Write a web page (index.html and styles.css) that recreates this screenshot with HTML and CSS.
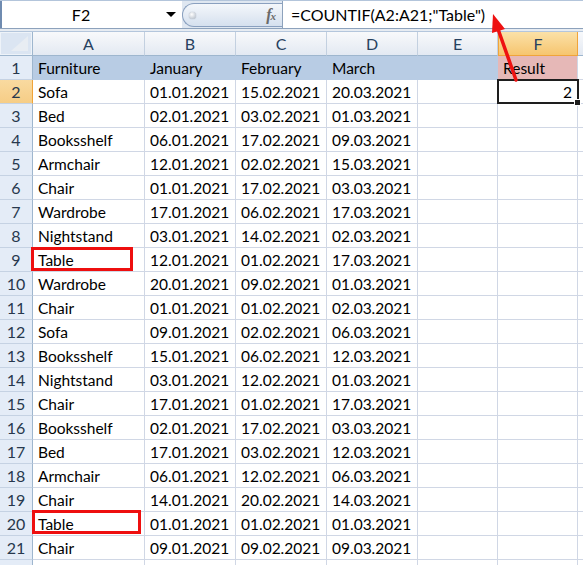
FILE: index.html
```html
<!DOCTYPE html>
<html>
<head>
<meta charset="utf-8">
<link rel="stylesheet" href="styles.css">
</head>
<body>
<div class="app">
  <div class="fbar">
    <div class="namebox"><span class="ref">F2</span><span class="drop"></span></div>
    <div class="pill"><span class="dot"></span><span class="fx">f<small>x</small></span></div>
    <div class="formula">=COUNTIF(A2:A21;"Table")</div>
  </div>
  <div class="strip"></div>
  <div class="sheet">
    <div class="corner"><span class="tri"></span></div>
    <div class="ch">A</div><div class="ch">B</div><div class="ch">C</div><div class="ch">D</div><div class="ch">E</div><div class="ch sel">F</div><div class="ch"></div>

    <div class="rh">1</div><div class="c hd">Furniture</div><div class="c hd">January</div><div class="c hd">February</div><div class="c hd">March</div><div class="c hd"></div><div class="c res">Result</div><div class="c"></div>
    <div class="rh sel">2</div><div class="c">Sofa</div><div class="c">01.01.2021</div><div class="c">15.02.2021</div><div class="c">20.03.2021</div><div class="c"></div><div class="c num">2</div><div class="c"></div>
    <div class="rh">3</div><div class="c">Bed</div><div class="c">02.01.2021</div><div class="c">03.02.2021</div><div class="c">01.03.2021</div><div class="c"></div><div class="c"></div><div class="c"></div>
    <div class="rh">4</div><div class="c">Booksshelf</div><div class="c">06.01.2021</div><div class="c">17.02.2021</div><div class="c">09.03.2021</div><div class="c"></div><div class="c"></div><div class="c"></div>
    <div class="rh">5</div><div class="c">Armchair</div><div class="c">12.01.2021</div><div class="c">02.02.2021</div><div class="c">15.03.2021</div><div class="c"></div><div class="c"></div><div class="c"></div>
    <div class="rh">6</div><div class="c">Chair</div><div class="c">01.01.2021</div><div class="c">17.02.2021</div><div class="c">03.03.2021</div><div class="c"></div><div class="c"></div><div class="c"></div>
    <div class="rh">7</div><div class="c">Wardrobe</div><div class="c">17.01.2021</div><div class="c">06.02.2021</div><div class="c">17.03.2021</div><div class="c"></div><div class="c"></div><div class="c"></div>
    <div class="rh">8</div><div class="c">Nightstand</div><div class="c">03.01.2021</div><div class="c">14.02.2021</div><div class="c">02.03.2021</div><div class="c"></div><div class="c"></div><div class="c"></div>
    <div class="rh">9</div><div class="c">Table</div><div class="c">12.01.2021</div><div class="c">01.02.2021</div><div class="c">17.03.2021</div><div class="c"></div><div class="c"></div><div class="c"></div>
    <div class="rh">10</div><div class="c">Wardrobe</div><div class="c">20.01.2021</div><div class="c">09.02.2021</div><div class="c">01.03.2021</div><div class="c"></div><div class="c"></div><div class="c"></div>
    <div class="rh">11</div><div class="c">Chair</div><div class="c">01.01.2021</div><div class="c">01.02.2021</div><div class="c">02.03.2021</div><div class="c"></div><div class="c"></div><div class="c"></div>
    <div class="rh">12</div><div class="c">Sofa</div><div class="c">09.01.2021</div><div class="c">02.02.2021</div><div class="c">06.03.2021</div><div class="c"></div><div class="c"></div><div class="c"></div>
    <div class="rh">13</div><div class="c">Booksshelf</div><div class="c">15.01.2021</div><div class="c">06.02.2021</div><div class="c">12.03.2021</div><div class="c"></div><div class="c"></div><div class="c"></div>
    <div class="rh">14</div><div class="c">Nightstand</div><div class="c">03.01.2021</div><div class="c">12.02.2021</div><div class="c">01.03.2021</div><div class="c"></div><div class="c"></div><div class="c"></div>
    <div class="rh">15</div><div class="c">Chair</div><div class="c">17.01.2021</div><div class="c">01.02.2021</div><div class="c">17.03.2021</div><div class="c"></div><div class="c"></div><div class="c"></div>
    <div class="rh">16</div><div class="c">Booksshelf</div><div class="c">02.01.2021</div><div class="c">17.02.2021</div><div class="c">03.03.2021</div><div class="c"></div><div class="c"></div><div class="c"></div>
    <div class="rh">17</div><div class="c">Bed</div><div class="c">17.01.2021</div><div class="c">03.02.2021</div><div class="c">12.03.2021</div><div class="c"></div><div class="c"></div><div class="c"></div>
    <div class="rh">18</div><div class="c">Armchair</div><div class="c">06.01.2021</div><div class="c">12.02.2021</div><div class="c">06.03.2021</div><div class="c"></div><div class="c"></div><div class="c"></div>
    <div class="rh">19</div><div class="c">Chair</div><div class="c">14.01.2021</div><div class="c">20.02.2021</div><div class="c">14.03.2021</div><div class="c"></div><div class="c"></div><div class="c"></div>
    <div class="rh">20</div><div class="c">Table</div><div class="c">01.01.2021</div><div class="c">01.02.2021</div><div class="c">01.03.2021</div><div class="c"></div><div class="c"></div><div class="c"></div>
    <div class="rh">21</div><div class="c">Chair</div><div class="c">09.01.2021</div><div class="c">09.02.2021</div><div class="c">09.03.2021</div><div class="c"></div><div class="c"></div><div class="c"></div>
    <div class="rh"></div><div class="c"></div><div class="c"></div><div class="c"></div><div class="c"></div><div class="c"></div><div class="c"></div><div class="c"></div>
  </div>

  <div class="selbox"><span class="handle"></span></div>
  <div class="mark mark1"></div>
  <div class="mark mark2"></div>
  <svg class="arrow" width="583" height="120" viewBox="0 0 583 120">
    <line x1="516" y1="80" x2="498" y2="29" stroke="#ee1111" stroke-width="3.5" stroke-linecap="round"/>
    <polygon points="493,14 505,29 492,33" fill="#ee1111"/>
  </svg>
</div>
</body>
</html>
```

FILE: styles.css
```css
html, body {
  margin: 0;
  padding: 0;
  background: #ffffff;
}
.app {
  position: relative;
  width: 583px;
  height: 565px;
  overflow: hidden;
  font-family: "Lato", "Liberation Sans", sans-serif;
  font-size: 15.5px;
  color: #000;
}
.fbar {
  height: 29px;
  box-sizing: border-box;
  border-top: 1px solid #b3c5db;
  border-bottom: 1px solid #8da2bc;
  display: flex;
  align-items: stretch;
  background: #dfe7f1;
}
.namebox {
  width: 182px;
  background: #fff;
  border-left: 2px solid #6f8bb0;
  box-sizing: border-box;
  display: flex;
  align-items: center;
  position: relative;
}
.ref {
  width: 158px;
  text-align: center;
  font-size: 16px;
  line-height: 27px;
}
.drop {
  width: 0;
  height: 0;
  border-left: 5px solid transparent;
  border-right: 5px solid transparent;
  border-top: 5px solid #000;
  margin-left: 6px;
}
.pill {
  width: 100px;
  margin: 2px 0 1px 0;
  border: 1px solid #8aa0bf;
  border-right: none;
  border-radius: 12px 0 0 12px;
  background: linear-gradient(#f4f7fb, #d5e0ee);
  display: flex;
  align-items: center;
  justify-content: space-between;
  padding: 0 7px 0 6px;
  box-sizing: border-box;
}
.dot {
  width: 7px;
  height: 7px;
  border-radius: 50%;
  background: radial-gradient(circle at 40% 35%, #ffffff, #a9b3c0);
  box-shadow: 0 0 1px #8a95a3;
}
.fx {
  font-family: "Liberation Serif", serif;
  font-style: italic;
  color: #6a6a6a;
  font-size: 16px;
  font-weight: bold;
  letter-spacing: -1px;
}
.fx small {
  font-size: 11px;
}
.formula {
  flex: 1;
  background: #fff;
  border-left: 1px solid #8da2bc;
  padding-left: 8px;
  line-height: 27px;
  font-size: 16px;
  white-space: nowrap;
}
.strip {
  height: 3px;
  background: #e7ecf2;
  border-bottom: 1px solid #b4c6dc;
  box-sizing: border-box;
}
.sheet {
  display: grid;
  grid-template-columns: 33px 112px 91px 91px 91px 80px 80px 30px;
  grid-template-rows: 24px;
  grid-auto-rows: 24px;
}
.sheet > div {
  box-sizing: border-box;
  white-space: nowrap;
  overflow: hidden;
}
.corner {
  background: #dbe5f2;
  border-right: 1px solid #9eb6ce;
  border-bottom: 1px solid #9eb6ce;
  position: relative;
  box-shadow: inset 0 0 0 1px #eef3f9;
}
.tri {
  position: absolute;
  right: 4px;
  bottom: 4px;
  width: 0;
  height: 0;
  border-left: 17px solid transparent;
  border-bottom: 15px solid #e8edf3;
}
.ch {
  background: linear-gradient(#f8f9fb, #e3e9f2);
  border-right: 1px solid #c3d0e0;
  border-bottom: 1px solid #9eb6ce;
  text-align: center;
  line-height: 24px;
  color: #27415f;
  font-size: 16px;
}
.ch.sel {
  background: linear-gradient(#fbe1a8, #f6c56f);
  border-right: 1px solid #f0a43a;
  border-bottom: 1px solid #f0a43a;
  border-left: 1px solid #f0a43a;
}
.rh {
  background: #e4ecf7;
  border-right: 1px solid #9eb6ce;
  border-bottom: 1px solid #c5d2e3;
  text-align: center;
  line-height: 24px;
  color: #27384d;
  font-size: 16px;
}
.rh.sel {
  background: linear-gradient(#f9daa0, #f6cd86);
  border-right: 1px solid #f0a43a;
}
.c {
  border-right: 1px solid #d0d7e5;
  border-bottom: 1px solid #d0d7e5;
  line-height: 24px;
  padding-left: 5px;
}
.c.hd {
  background: #b8cce4;
  border-right-color: #b8cce4;
  border-bottom-color: #b8cce4;
}
.c.res {
  background: #e6b8b7;
  border-bottom-color: #e6b8b7;
}
.c.num {
  text-align: right;
  padding-right: 5px;
}
.selbox {
  position: absolute;
  left: 497px;
  top: 79px;
  width: 82px;
  height: 25px;
  box-sizing: border-box;
  border: 2px solid #1e1e1e;
}
.handle {
  position: absolute;
  right: -4px;
  bottom: -4px;
  width: 5px;
  height: 5px;
  background: #1e1e1e;
  border: 1px solid #fff;
}
.mark {
  position: absolute;
  box-sizing: border-box;
  border: 3px solid #ee0f0f;
}
.mark1 {
  left: 31px;
  top: 247px;
  width: 102px;
  height: 24px;
}
.mark2 {
  left: 32px;
  top: 510px;
  width: 109px;
  height: 24px;
}
.arrow {
  position: absolute;
  left: 0;
  top: 0;
  pointer-events: none;
}
```
